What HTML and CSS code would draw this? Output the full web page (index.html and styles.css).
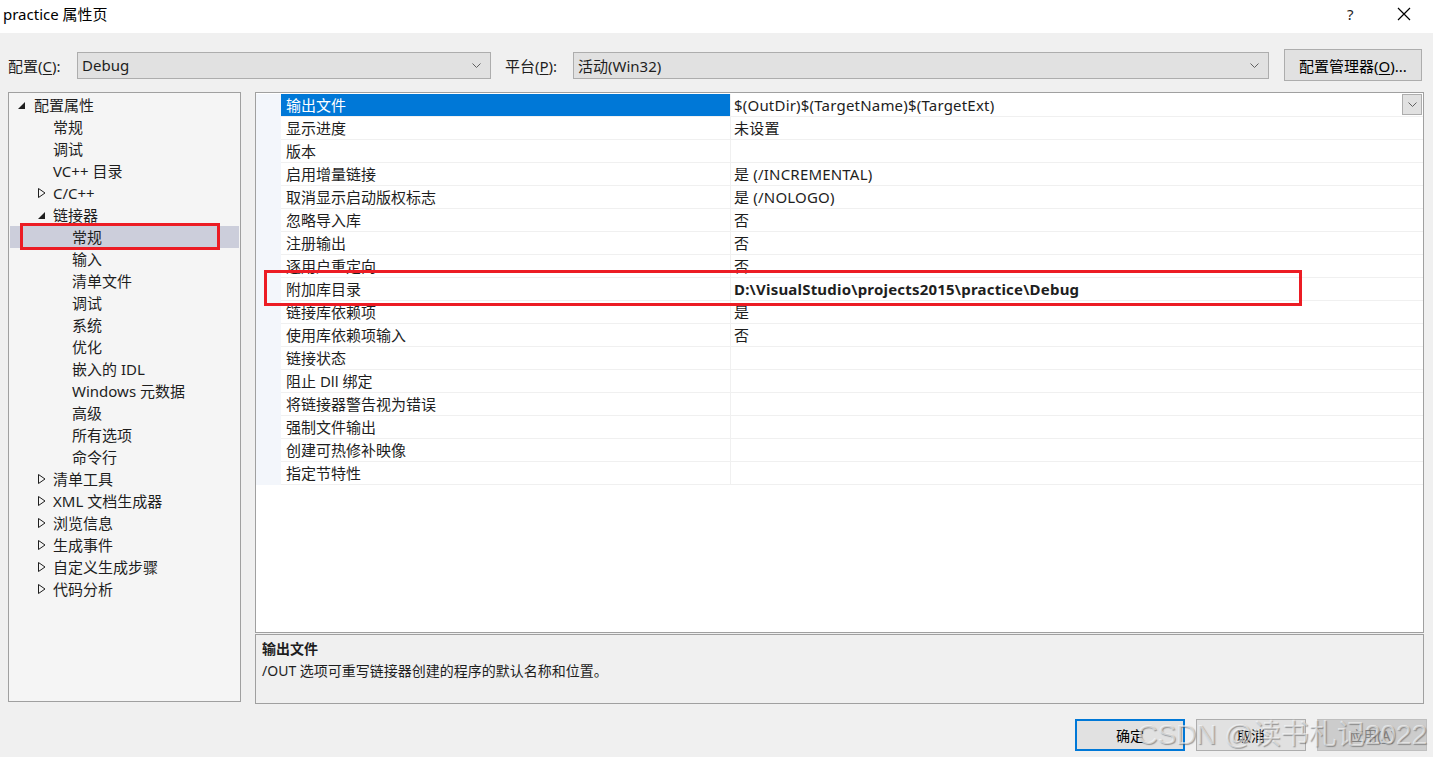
FILE: index.html
```html
<!DOCTYPE html>
<html lang="zh-CN">
  <head>
    <meta charset="UTF-8" />
    <title>practice 属性页</title>
    <link rel="stylesheet" href="styles.css">
  </head>
  <body>
    <div class="titlebar">
      <span class="title">practice 属性页</span>
      <div class="title-buttons">
        <span class="help">?</span>
        <svg class="close" width="14" height="14" viewBox="0 0 14 14">
          <path d="M1 1 L13 13 M13 1 L1 13" stroke="#000" stroke-width="1.2" fill="none" />
        </svg>
      </div>
    </div>

    <div class="config-row">
      <label class="lbl">配置(<u>C</u>):</label>
      <div class="combo combo-config">
        <span>Debug</span>
        <svg class="chev" width="9" height="5" viewBox="0 0 9 5"><path d="M0.5 0.5 L4.5 4.5 L8.5 0.5" stroke="#606060" fill="none" /></svg>
      </div>
      <label class="lbl lbl-platform">平台(<u>P</u>):</label>
      <div class="combo combo-platform">
        <span>活动(Win32)</span>
        <svg class="chev" width="9" height="5" viewBox="0 0 9 5"><path d="M0.5 0.5 L4.5 4.5 L8.5 0.5" stroke="#606060" fill="none" /></svg>
      </div>
      <button class="btn btn-manager">配置管理器(<u>O</u>)...</button>
    </div>

    <div class="main">
      <div class="tree">
        <div class="node lv0"><svg class="tri" width="8" height="8" viewBox="0 0 8 8"><path d="M7 0 L7 7 L0 7 Z" fill="#1e1e1e" /></svg>配置属性</div>
        <div class="node lv1">常规</div>
        <div class="node lv1">调试</div>
        <div class="node lv1">VC++ 目录</div>
        <div class="node lv1"><svg class="tri" width="8" height="10" viewBox="0 0 8 10"><path d="M0.5 0.5 L7 5 L0.5 9.5 Z" fill="none" stroke="#1e1e1e" /></svg>C/C++</div>
        <div class="node lv1"><svg class="tri" width="8" height="8" viewBox="0 0 8 8"><path d="M7 0 L7 7 L0 7 Z" fill="#1e1e1e" /></svg>链接器</div>
        <div class="node lv2 selected">常规<span class="mark mark-tree"></span></div>
        <div class="node lv2">输入</div>
        <div class="node lv2">清单文件</div>
        <div class="node lv2">调试</div>
        <div class="node lv2">系统</div>
        <div class="node lv2">优化</div>
        <div class="node lv2">嵌入的 IDL</div>
        <div class="node lv2">Windows 元数据</div>
        <div class="node lv2">高级</div>
        <div class="node lv2">所有选项</div>
        <div class="node lv2">命令行</div>
        <div class="node lv1"><svg class="tri" width="8" height="10" viewBox="0 0 8 10"><path d="M0.5 0.5 L7 5 L0.5 9.5 Z" fill="none" stroke="#1e1e1e" /></svg>清单工具</div>
        <div class="node lv1"><svg class="tri" width="8" height="10" viewBox="0 0 8 10"><path d="M0.5 0.5 L7 5 L0.5 9.5 Z" fill="none" stroke="#1e1e1e" /></svg>XML 文档生成器</div>
        <div class="node lv1"><svg class="tri" width="8" height="10" viewBox="0 0 8 10"><path d="M0.5 0.5 L7 5 L0.5 9.5 Z" fill="none" stroke="#1e1e1e" /></svg>浏览信息</div>
        <div class="node lv1"><svg class="tri" width="8" height="10" viewBox="0 0 8 10"><path d="M0.5 0.5 L7 5 L0.5 9.5 Z" fill="none" stroke="#1e1e1e" /></svg>生成事件</div>
        <div class="node lv1"><svg class="tri" width="8" height="10" viewBox="0 0 8 10"><path d="M0.5 0.5 L7 5 L0.5 9.5 Z" fill="none" stroke="#1e1e1e" /></svg>自定义生成步骤</div>
        <div class="node lv1"><svg class="tri" width="8" height="10" viewBox="0 0 8 10"><path d="M0.5 0.5 L7 5 L0.5 9.5 Z" fill="none" stroke="#1e1e1e" /></svg>代码分析</div>
      </div>

      <div class="right">
        <div class="grid">
          <div class="rows">
            <div class="row active"><div class="name">输出文件</div><div class="value">$(OutDir)$(TargetName)$(TargetExt)<span class="drop"><svg width="9" height="5" viewBox="0 0 9 5"><path d="M0.5 0.5 L4.5 4.5 L8.5 0.5" stroke="#606060" fill="none" /></svg></span></div></div>
            <div class="row"><div class="name">显示进度</div><div class="value">未设置</div></div>
            <div class="row"><div class="name">版本</div><div class="value"></div></div>
            <div class="row"><div class="name">启用增量链接</div><div class="value">是 (/INCREMENTAL)</div></div>
            <div class="row"><div class="name">取消显示启动版权标志</div><div class="value">是 (/NOLOGO)</div></div>
            <div class="row"><div class="name">忽略导入库</div><div class="value">否</div></div>
            <div class="row"><div class="name">注册输出</div><div class="value">否</div></div>
            <div class="row"><div class="name">逐用户重定向</div><div class="value">否</div></div>
            <div class="row"><div class="name">附加库目录</div><div class="value bold">D:\VisualStudio\projects2015\practice\Debug</div><span class="mark mark-row"></span></div>
            <div class="row"><div class="name">链接库依赖项</div><div class="value">是</div></div>
            <div class="row"><div class="name">使用库依赖项输入</div><div class="value">否</div></div>
            <div class="row"><div class="name">链接状态</div><div class="value"></div></div>
            <div class="row"><div class="name">阻止 Dll 绑定</div><div class="value"></div></div>
            <div class="row"><div class="name">将链接器警告视为错误</div><div class="value"></div></div>
            <div class="row"><div class="name">强制文件输出</div><div class="value"></div></div>
            <div class="row"><div class="name">创建可热修补映像</div><div class="value"></div></div>
            <div class="row"><div class="name">指定节特性</div><div class="value"></div></div>
          </div>
        </div>
        <div class="desc">
          <div class="desc-title">输出文件</div>
          <div class="desc-text">/OUT 选项可重写链接器创建的程序的默认名称和位置。</div>
        </div>
      </div>
    </div>

    <div class="footer">
      <button class="btn btn-ok">确定</button>
      <button class="btn">取消</button>
      <button class="btn btn-disabled">应用(<u>A</u>)</button>
      <span class="watermark">CSDN @读书札记2022</span>
    </div>
  </body>
</html>
```

FILE: styles.css
```css
* {
  margin: 0;
  padding: 0;
  box-sizing: border-box;
}
body {
  width: 1433px;
  height: 757px;
  overflow: hidden;
  background-color: #f0f0f0;
  color: #1e1e1e;
  font-family: "Noto Sans", "Noto Sans CJK SC", sans-serif;
  font-size: 14px;
}
u {
  text-decoration: underline;
  text-underline-offset: 2px;
}

/* title bar */
.titlebar {
  height: 33px;
  background-color: #fff;
  display: flex;
  align-items: center;
  justify-content: space-between;
  padding-left: 3px;
}
.titlebar .title {
  font-size: 15px;
  color: #000;
  margin-top: -6px;
}
.title-buttons {
  display: flex;
  align-items: center;
  margin-top: -6px;
}
.title-buttons .help {
  font-size: 15px;
  width: 18px;
  margin-right: 32px;
}
.title-buttons .close {
  margin-right: 22px;
}

/* config row */
.config-row {
  display: flex;
  align-items: center;
  height: 32px;
  margin-top: 16px;
  padding-left: 8px;
}
.lbl {
  font-size: 15px;
  width: 69px;
}
.lbl-platform {
  width: 68px;
  margin-left: 14px;
}
.combo {
  height: 27px;
  background-color: #e1e1e1;
  border: 1px solid #adadad;
  display: flex;
  align-items: center;
  justify-content: space-between;
  padding: 0 9px 0 4px;
  font-size: 15px;
}
.combo-config {
  width: 414px;
}
.combo-platform {
  width: 696px;
}
.btn {
  height: 32px;
  width: 110px;
  background-color: #e1e1e1;
  border: 1px solid #adadad;
  font-family: inherit;
  font-size: 14px;
  color: #000;
}
.btn-manager {
  width: 138px;
  margin-left: 15px;
  font-size: 15px;
}

/* main area */
.main {
  display: flex;
  margin-top: 11px;
  padding-left: 8px;
  column-gap: 14px;
}
.tree {
  width: 233px;
  height: 610px;
  background-color: #f5f5f5;
  border: 1px solid #a0a0a0;
  padding-top: 1px;
}
.node {
  position: relative;
  height: 22px;
  line-height: 22px;
  font-size: 15px;
  white-space: nowrap;
  display: flex;
  align-items: center;
}
.node .tri {
  position: absolute;
}
.lv0 {
  padding-left: 25px;
}
.lv0 .tri {
  left: 9px;
  top: 8px;
}
.lv1 {
  padding-left: 44px;
}
.lv1 .tri {
  left: 29px;
  top: 6px;
}
.lv1 svg[height="8"] {
  top: 8px;
}
.lv2 {
  padding-left: 63px;
}
.node.selected {
  background-color: #cccedb;
  margin: 0 1px;
  padding-left: 62px;
}
.mark {
  position: absolute;
  z-index: 2;
  border: 3px solid #ec1c24;
  pointer-events: none;
}
.mark-tree {
  left: 10px;
  top: -3px;
  width: 200px;
  height: 27px;
}

/* property grid */
.right {
  display: flex;
  flex-direction: column;
  row-gap: 1px;
}
.grid {
  width: 1169px;
  height: 541px;
  background-color: #fff;
  border: 1px solid #a0a0a0;
  padding-top: 1px;
}
.rows {
  background-color: #f3f6fb;
  padding-left: 25px;
}
.row {
  position: relative;
  display: flex;
  height: 23px;
  background-color: #fff;
  border-bottom: 1px solid #f0f0f0;
}
.row .name {
  width: 450px;
  padding-left: 5px;
  line-height: 22px;
  font-size: 15px;
  border-right: 1px solid #f0f0f0;
  white-space: nowrap;
}
.row .value {
  flex: 1;
  position: relative;
  padding-left: 3px;
  line-height: 22px;
  font-size: 15px;
  letter-spacing: 0.2px;
  white-space: nowrap;
}
.row .value.bold {
  font-weight: bold;
}
.row.active .name {
  background-color: #0078d7;
  color: #fff;
}
.drop {
  position: absolute;
  right: 1px;
  top: 0;
  width: 20px;
  height: 21px;
  background-color: #e1e1e1;
  border: 1px solid #adadad;
  display: flex;
  align-items: center;
  justify-content: center;
}
.mark-row {
  left: -17px;
  top: -8px;
  width: 1038px;
  height: 36px;
}

/* description */
.desc {
  height: 70px;
  border: 1px solid #a0a0a0;
  background-color: #f0f0f0;
  padding: 3px 6px;
}
.desc-title {
  font-weight: bold;
  font-size: 14px;
  line-height: 22px;
}
.desc-text {
  font-size: 14px;
  line-height: 22px;
}

/* footer buttons */
.footer {
  position: relative;
  display: flex;
  justify-content: flex-end;
  column-gap: 11px;
  margin-top: 15px;
  padding-right: 6px;
}
.btn-ok {
  border: 2px solid #0078d7;
}
.btn-disabled {
  background-color: #cccccc;
  border-color: #bfbfbf;
  color: #838383;
}
.watermark {
  position: absolute;
  right: 6px;
  top: 0;
  font-family: "Liberation Sans", "Noto Sans CJK SC", sans-serif;
  font-size: 28px;
  line-height: 32px;
  color: rgba(255, 255, 255, 0.55);
  text-shadow: 1px 1px 1px rgba(90, 90, 90, 0.55);
  white-space: nowrap;
  pointer-events: none;
}
```
